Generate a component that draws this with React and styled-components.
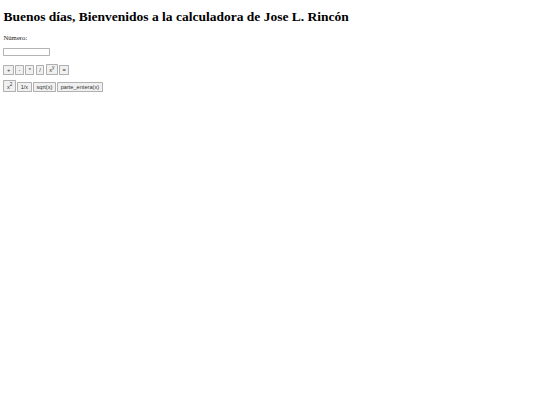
import React, { useState } from 'react';
import styled, { createGlobalStyle } from 'styled-components';

// the reference is a 1280px wide page shown at 540px, so the whole page is scaled
const GlobalStyle = createGlobalStyle`
  html, body {
    margin: 0;
    padding: 0;
    background: #ffffff;
  }
  body {
    font-family: "Liberation Serif", "Times New Roman", serif;
    color: #000000;
  }
`;

const Page = styled.div`
  zoom: 0.421875;
  padding: 8px;
  display: flow-root;
`;

const Title = styled.h1`
  font-family: "Liberation Serif", serif;
  font-size: 32px;
  font-weight: bold;
  margin: 13px 0 21px 0;
`;

const Label = styled.p`
  font-size: 16px;
  color: #222;
  margin: 16px 0 18px 0;
`;

const NumberInput = styled.input`
  display: block;
  box-sizing: border-box;
  width: 111px;
  height: 18px;
  padding: 1px 2px;
  border: 1px solid #b4b4b4;
  border-radius: 2px;
  font-size: 13.33px;
  margin: 0 0 18px 0;
`;

const ButtonRow = styled.div`
  display: flex;
  align-items: flex-end;
  gap: 3px;
  margin-bottom: 14px;
`;

const CalcButton = styled.button`
  font-family: "Liberation Sans", Arial, sans-serif;
  font-size: 13.33px;
  line-height: 15px;
  padding: 1px 6px;
  background: #f0f0f0;
  border: 1px solid #b0b0b0;
  border-radius: 2px;
  color: #333;
  cursor: pointer;
`;

export default function App() {
  const [value, setValue] = useState('');

  return (
    <Page>
      <GlobalStyle />
      <Title>Buenos días, Bienvenidos a la calculadora de Jose L. Rincón</Title>
      <Label>Número:</Label>
      <NumberInput value={value} onChange={e => setValue(e.target.value)} />
      <ButtonRow>
        <CalcButton>+</CalcButton>
        <CalcButton>-</CalcButton>
        <CalcButton>*</CalcButton>
        <CalcButton>/</CalcButton>
        <CalcButton>x<sup>y</sup></CalcButton>
        <CalcButton>=</CalcButton>
      </ButtonRow>
      <ButtonRow>
        <CalcButton>x<sup>2</sup></CalcButton>
        <CalcButton>1/x</CalcButton>
        <CalcButton>sqrt(x)</CalcButton>
        <CalcButton>parte_entera(x)</CalcButton>
      </ButtonRow>
    </Page>
  );
}
